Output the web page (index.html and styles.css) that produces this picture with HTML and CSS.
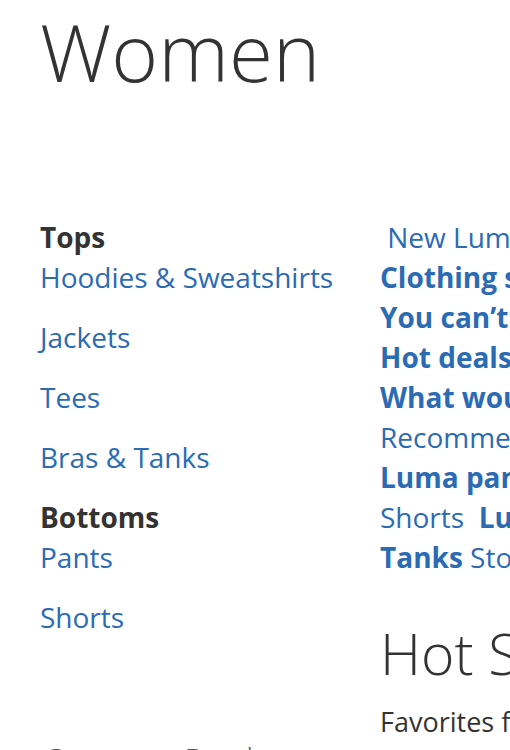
FILE: index.html
```html
<!DOCTYPE html>
<html lang="en">
<head>
<meta charset="utf-8">
<title>Women</title>
<link rel="stylesheet" href="styles.css">
</head>
<body>
<div class="page">
  <h1 class="title">Women</h1>
  <div class="menu">
    <div class="cats">
      <div class="group">
        <div class="group-title">Tops</div>
        <ul class="links">
          <li><a href="#">Hoodies &amp; Sweatshirts</a></li>
          <li><a href="#">Jackets</a></li>
          <li><a href="#">Tees</a></li>
          <li><a href="#">Bras &amp; Tanks</a></li>
        </ul>
      </div>
      <div class="group">
        <div class="group-title">Bottoms</div>
        <ul class="links">
          <li><a href="#">Pants</a></li>
          <li><a href="#">Shorts</a></li>
        </ul>
      </div>
      <div class="compare">Compare Products</div>
    </div>
    <div class="promo">
      <p class="promo-text">
        <a href="#">&nbsp;New Luma Yoga Collection</a><br>
        <a href="#" class="strong">Clothing so comfortable you'll want to live in it</a><br>
        <a href="#" class="strong">You can’t go wrong with the Luma collection</a><br>
        <a href="#" class="strong">Hot deals on activewear for the season</a><br>
        <a href="#" class="strong">What would you like to wear today?</a><br>
        <a href="#">Recommended for your workout routine</a><br>
        <a href="#" class="strong">Luma pants when you shop today</a><br>
        <a href="#">Shorts</a>&nbsp; <a href="#" class="strong">Luma tanks and tees</a><br>
        <a href="#" class="strong">Tanks</a> <a href="#">Stock up on layers</a>
      </p>
      <h2 class="hot">Hot Sellers</h2>
      <p class="fav">Favorites from Luma shoppers</p>
    </div>
  </div>
</div>
</body>
</html>
```

FILE: styles.css
```css
html, body {
  margin: 0;
  padding: 0;
  background: #fff;
  overflow: hidden;
}
body {
  font-family: "Open Sans", "Liberation Sans", sans-serif;
  color: #333;
  width: 510px;
  height: 750px;
}
.page {
  padding-left: 40px;
  width: 900px;
}
.title {
  margin: 11px 0 0 0;
  font-size: 80px;
  line-height: 80px;
  font-weight: 300;
  color: #333;
}
.menu {
  display: grid;
  grid-template-columns: 340px 1fr;
  margin-top: 126px;
}
.group-title {
  font-size: 28px;
  font-weight: 700;
  line-height: 40px;
  color: #333;
}
.links {
  list-style: none;
  margin: 0;
  padding: 0;
}
.links li {
  font-size: 28px;
  line-height: 40px;
  margin-bottom: 20px;
}
a {
  color: #2b6bb4;
  text-decoration: none;
}
.compare {
  margin-top: 102px;
  padding-left: 3px;
  font-size: 32px;
  font-weight: 300;
  line-height: 40px;
  color: #555;
  white-space: nowrap;
}
.promo-text {
  margin: 0;
  font-size: 28px;
  line-height: 40px;
  white-space: nowrap;
}
.strong {
  font-weight: 700;
}
.hot {
  margin: 41px 0 0 0;
  font-size: 57px;
  line-height: 70px;
  font-weight: 300;
  color: #333;
  white-space: nowrap;
}
.fav {
  margin: 16px 0 0 0;
  font-size: 27px;
  line-height: 36px;
  color: #333;
  white-space: nowrap;
}
```
